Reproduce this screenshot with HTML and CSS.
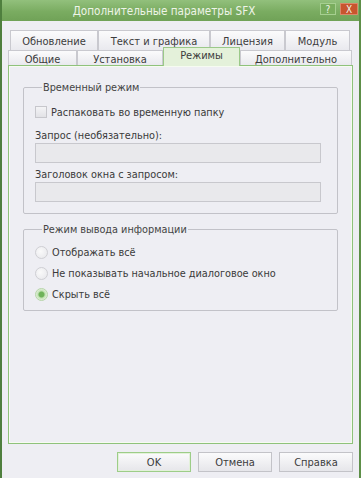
FILE: index.html
```html
<!DOCTYPE html>
<html lang="ru">
<head>
<meta charset="utf-8">
<link rel="stylesheet" href="styles.css">
</head>
<body>
<div class="window">
  <div class="titlebar">
    <div class="title">Дополнительные параметры SFX</div>
    <div class="tbtns">
      <span class="tbtn help">?</span>
      <span class="tbtn close">X</span>
    </div>
  </div>
  <div class="body">
    <div class="tabs">
      <div class="row row1">
        <span class="tab w88">Обновление</span>
        <span class="tab w112">Текст и графика</span>
        <span class="tab w75">Лицензия</span>
        <span class="tab w65">Модуль</span>
      </div>
      <div class="row row2">
        <span class="tab w69">Общие</span>
        <span class="tab w86">Установка</span>
        <span class="tab w77 active">Режимы</span>
        <span class="tab w112b">Дополнительно</span>
      </div>
    </div>
    <div class="panel">
      <fieldset class="group g1">
        <legend>Временный режим</legend>
        <label class="check"><span class="box"></span>Распаковать во временную папку</label>
        <div class="lbl l1">Запрос (необязательно):</div>
        <div class="input"></div>
        <div class="lbl l2">Заголовок окна с запросом:</div>
        <div class="input"></div>
      </fieldset>
      <fieldset class="group g2">
        <legend>Режим вывода информации</legend>
        <label class="radio"><span class="dot"></span>Отображать всё</label>
        <label class="radio"><span class="dot"></span>Не показывать начальное диалоговое окно</label>
        <label class="radio"><span class="dot on"></span>Скрыть всё</label>
      </fieldset>
    </div>
    <div class="buttons">
      <span class="btn ok">OK</span>
      <span class="btn">Отмена</span>
      <span class="btn">Справка</span>
    </div>
  </div>
</div>
</body>
</html>
```
FILE: styles.css
```css
* { box-sizing: border-box; }
html, body { margin: 0; padding: 0; background: #eeeef3; }
body {
  font-family: "DejaVu Sans", "Liberation Sans", sans-serif;
  font-stretch: condensed;
  font-size: 10.8px;
  color: #3a3a3a;
}
.window {
  width: 361px;
  height: 478px;
  background: #eeeef3;
  border-left: 2px solid #4f7f3e;
  border-right: 2px solid #5d8f48;
  display: flex;
  flex-direction: column;
}
.titlebar {
  height: 21px;
  background: linear-gradient(#92c07c, #7aac61 55%, #70a257);
  display: flex;
  align-items: center;
}
.title {
  flex: 1;
  text-align: center;
  color: #eef4e8;
  font-size: 11.6px;
  padding-left: 6px;
  padding-top: 1px;
}
.tbtns {
  display: flex;
  gap: 4px;
  padding-right: 1px;
  align-self: flex-start;
  margin-top: 3px;
}
.tbtn {
  width: 16px;
  height: 12px;
  font-size: 10px;
  line-height: 11px;
  text-align: center;
  color: #eef4e8;
  border: 1px solid #a6cf90;
}
.help { background: #79ad5e; }
.close { width: 18px; background: #c8552e; border-color: #d9886a; }
.body {
  flex: 1;
  padding: 9px 6px 0 6px;
  display: flex;
  flex-direction: column;
}
.tabs { display: flex; flex-direction: column; }
.row { display: flex; }
.row1 { padding-left: 2px; height: 20px; }
.row2 { height: 15px; position: relative; z-index: 1; }
.tab {
  display: flex;
  align-items: center;
  justify-content: center;
  border: 1px solid #c9c9cf;
  border-bottom: none;
  background: linear-gradient(#fbfbfc, #e9e9ee);
  color: #3c3c3c;
  font-size: 11px;
}
.row1 .tab { padding-top: 2px; }
.row2 .tab { padding-top: 2px; }
.w88 { width: 88px; }
.w112 { width: 112px; }
.w75 { width: 75px; }
.w65 { width: 65px; }
.w69 { width: 69px; }
.w86 { width: 86px; }
.w77 { width: 77px; }
.w112b { width: 112px; }
.tab.active {
  height: 19px;
  margin-top: -3px;
  padding-top: 0;
  padding-bottom: 3px;
  background: #e4f1da;
  border-color: #9bc989;
}
.panel {
  height: 379px;
  border: 1px solid #8fc27b;
  box-shadow: inset 0 0 0 1px #f6fbf1;
  padding: 15px 14px 0 14px;
  display: flex;
  flex-direction: column;
}
.group {
  margin: 0;
  border: 1px solid #c2c2c8;
  border-radius: 2px;
  padding: 0 0 0 11px;
}
legend {
  padding: 0 1px;
  margin-left: 7px;
  color: #444;
}
.g1 { height: 133px; }
.g2 { height: 88px; margin-top: 9px; }
.check, .radio {
  display: flex;
  align-items: center;
  height: 20px;
}
.check { margin-top: 8px; }
.box {
  width: 12px;
  height: 12px;
  border: 1px solid #c7c7cc;
  background: linear-gradient(#f4f4f6, #e2e2e6);
  margin-right: 4px;
}
.lbl {
  height: 16px;
  display: flex;
  align-items: center;
}
.l1 { margin-top: 5px; }
.l2 { margin-top: 3px; }
.input {
  width: 286px;
  height: 20px;
  border: 1px solid #c8c8cd;
  background: #e9e9ec;
}
.radio { height: 21px; }
.g2 .radio:first-of-type { margin-top: 6px; }
.dot {
  width: 13px;
  height: 13px;
  border-radius: 50%;
  border: 1px solid #cfcfd3;
  background: radial-gradient(circle at 40% 40%, #fafafa, #e6e6ea);
  margin-right: 4px;
}
.dot.on {
  background: radial-gradient(circle, #6fb35a 0 2.5px, #bfe0b0 3.5px, #e9f3e3 6px);
  border-color: #b6d5a8;
}
.buttons {
  display: flex;
  justify-content: flex-end;
  gap: 7px;
  padding-top: 8px;
}
.btn {
  width: 74px;
  height: 20px;
  display: flex;
  align-items: center;
  justify-content: center;
  border: 1px solid #c3c3c8;
  background: linear-gradient(#fbfbfc, #e6e6ea);
  font-size: 11px;
  color: #3c3c3c;
}
.btn.ok { border-color: #9dcd88; box-shadow: inset 0 0 0 1px #e3f1da; }
```
